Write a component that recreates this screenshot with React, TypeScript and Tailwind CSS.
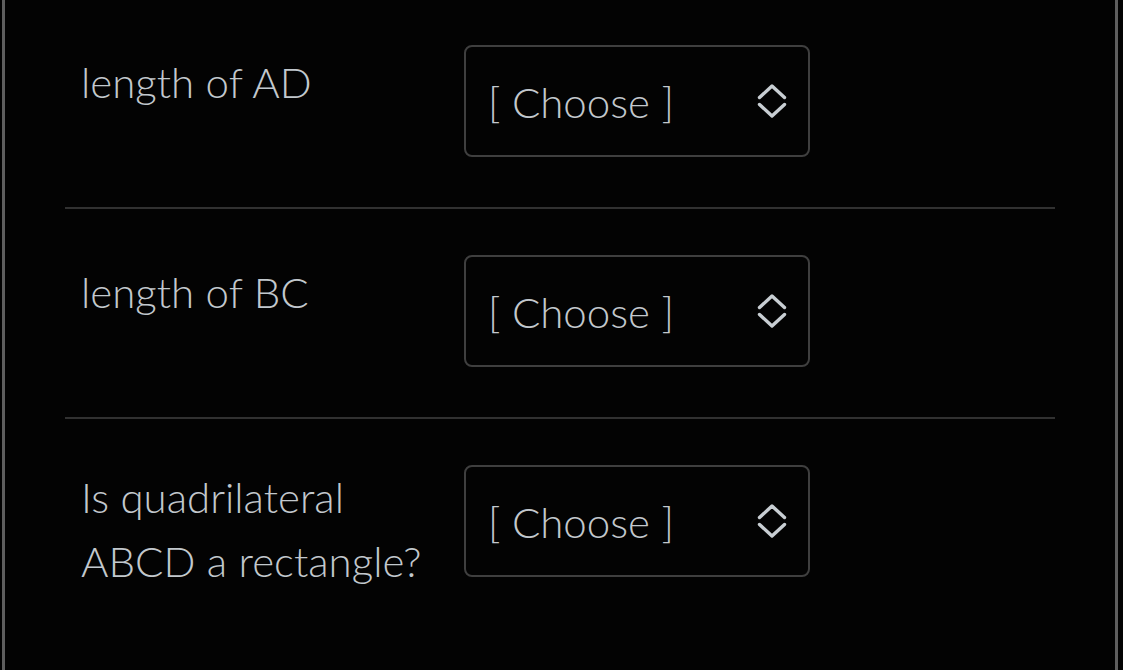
const rows = [
  { label: ['length of AD'], pt: 'pt-[45px]', lpt: 'pt-[5px]' },
  { label: ['length of BC'], pt: 'pt-[46px]', lpt: 'pt-[5px]' },
  { label: ['Is quadrilateral', 'ABCD a rectangle?'], pt: 'pt-[46px]', lpt: 'pt-0' },
];

function Chevrons() {
  return (
    <svg width="30" height="34" viewBox="0 0 30 34" fill="none" stroke="#c8ced3" strokeWidth="3.4" strokeLinecap="round" strokeLinejoin="round">
      <polyline points="2.5,13.5 15,2 27.5,13.5" />
      <polyline points="2.5,20.5 15,32 27.5,20.5" />
    </svg>
  );
}

function ChooseSelect() {
  return (
    <div className="w-[346px] h-[112px] shrink-0 rounded-[8px] border-[2.5px] border-[#3f3f3f] flex items-center justify-between pl-[22px] pr-[21px]">
      <span className="text-[42px] leading-[64px] font-light text-[#c2c8cd] pt-[2px]">[ Choose ]</span>
      <Chevrons />
    </div>
  );
}

export default function App() {
  return (
    <div className="w-[1123px] h-[670px] bg-[#030303] overflow-hidden pl-[2px] font-['Lato','Liberation_Sans',sans-serif]">
      <div className="w-[1116px] h-full border-l-[3px] border-r-[3px] border-[#5e5e5e] pl-[60px]">
        <div className="w-[990px]">
          {rows.map((row, i) => (
            <div key={i} className={`flex ${row.pt} pb-[50px] ${i < rows.length - 1 ? 'border-b-2 border-[#313131]' : ''}`}>
              <div className={`w-[399px] shrink-0 pl-[16px] ${row.lpt} text-[42px] leading-[64px] font-light text-[#c2c8cd]`}>
                {row.label.map((l) => (
                  <div key={l}>{l}</div>
                ))}
              </div>
              <ChooseSelect />
            </div>
          ))}
        </div>
      </div>
    </div>
  );
}
